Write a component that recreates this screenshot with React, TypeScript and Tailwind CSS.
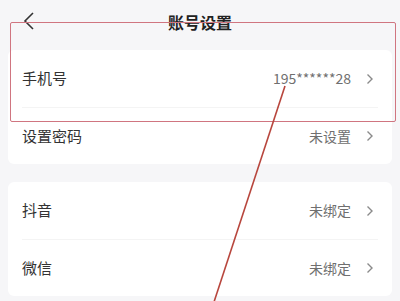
const rows = [
  [
    { label: "手机号", value: "195******28" },
    { label: "设置密码", value: "未设置" },
  ],
  [
    { label: "抖音", value: "未绑定" },
    { label: "微信", value: "未绑定" },
  ],
];

function Chevron() {
  return (
    <svg width="8" height="12" viewBox="0 0 8 12" fill="none">
      <path d="M1.5 1.5 L6 6 L1.5 10.5" stroke="#8a8a8a" strokeWidth="1.4" />
    </svg>
  );
}

export default function App() {
  return (
    <div
      className="relative w-[400px] h-[301px] overflow-hidden bg-[#f6f6f8] text-[#222]"
      style={{ fontFamily: '"Noto Sans CJK SC", "Noto Sans", sans-serif' }}
    >
      {/* 顶部 */}
      <div className="relative h-[50px] flex items-start justify-center pt-[8px]">
        <svg className="absolute left-[22px] top-[11px]" width="14" height="20" viewBox="0 0 14 20" fill="none">
          <path d="M11 2 L3 10 L11 18" stroke="#333" strokeWidth="1.6" />
        </svg>
        <h1 className="text-[16px] font-bold leading-[28px]">账号设置</h1>
      </div>

      {/* 列表 */}
      <div className="flex flex-col gap-[18px] px-[8px]">
        {rows.map((group, gi) => (
          <div key={gi} className="bg-white rounded-[6px] px-[14px]">
            {group.map(({ label, value }, i) => (
              <div
                key={label}
                className={`h-[57px] flex items-center justify-between ${
                  i > 0 ? "border-t border-[#f4f4f4]" : ""
                }`}
              >
                <span className="text-[15px] text-[#333]">{label}</span>
                <div className="flex items-center gap-[15px] pr-[4px]">
                  <span className="text-[14px] text-[#6f6f6f]">{value}</span>
                  <Chevron />
                </div>
              </div>
            ))}
          </div>
        ))}
      </div>

      {/* 标注 */}
      <div className="absolute left-[10px] top-[22px] w-[386px] h-[100px] border-[1.5px] border-[#d07580] rounded-[2px] pointer-events-none" />
      <svg className="absolute inset-0 pointer-events-none" width="400" height="301">
        <line x1="285" y1="86" x2="213" y2="305" stroke="#b8463d" strokeWidth="1.6" />
      </svg>
    </div>
  );
}
